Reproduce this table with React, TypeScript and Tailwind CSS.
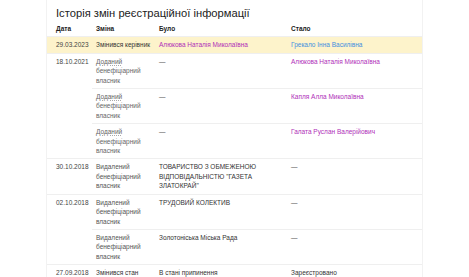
import React from "react";

type Sub = { change: React.ReactNode; was: React.ReactNode; now: React.ReactNode };
type Row = { date: string; subs: Sub[]; highlight?: boolean };

const P = ({ children }: { children: React.ReactNode }) => (
  <span className="text-[#b02fb8]">{children}</span>
);
const Dash = () => <span className="text-[#555]">—</span>;
const Added = () => (
  <span className="text-[#666]">
    <span className="underline decoration-dotted decoration-[#aaa] underline-offset-[1px]">Доданий</span>
    <br />
    бенефіціарний
    <br />
    власник
  </span>
);
const Removed = () => (
  <span className="text-[#555]">
    Видалений
    <br />
    бенефіціарний
    <br />
    власник
  </span>
);

const rows: Row[] = [
  {
    date: "29.03.2023",
    highlight: true,
    subs: [
      {
        change: <span className="text-[#333] whitespace-nowrap">Змінився керівник</span>,
        was: <P>Алюкова Наталія Миколаївна</P>,
        now: <span className="text-[#3f8fe0]">Грекало Інна Василівна</span>,
      },
    ],
  },
  {
    date: "18.10.2021",
    subs: [
      { change: <Added />, was: <Dash />, now: <P>Алюкова Наталія Миколаївна</P> },
      { change: <Added />, was: <Dash />, now: <P>Капля Алла Миколаївна</P> },
      { change: <Added />, was: <Dash />, now: <P>Галата Руслан Валерійович</P> },
    ],
  },
  {
    date: "30.10.2018",
    subs: [
      {
        change: <Removed />,
        was: (
          <span className="text-[#333]">
            ТОВАРИСТВО З ОБМЕЖЕНОЮ ВІДПОВІДАЛЬНІСТЮ "ГАЗЕТА ЗЛАТОКРАЙ"
          </span>
        ),
        now: <Dash />,
      },
    ],
  },
  {
    date: "02.10.2018",
    subs: [
      { change: <Removed />, was: <span className="text-[#333]">ТРУДОВИЙ КОЛЕКТИВ</span>, now: <Dash /> },
      { change: <Removed />, was: <span className="text-[#333]">Золотоніська Міська Рада</span>, now: <Dash /> },
    ],
  },
  {
    date: "27.09.2018",
    subs: [
      {
        change: <span className="text-[#333]">Змінився стан</span>,
        was: <span className="text-[#333]">В стані припинення</span>,
        now: <span className="text-[#333]">Зареєстровано</span>,
      },
    ],
  },
];

export default function App() {
  return (
    <div
      className="w-full h-[277px] overflow-hidden bg-white"
      style={{ fontFamily: "'Liberation Sans', Arial, sans-serif" }}
    >
      <div className="mx-auto w-[377px] min-h-[277px] border-x border-[#f2f2f2] bg-white">
        <h2 className="pl-[9px] pt-[5px] text-[11.2px] leading-[16px] font-normal text-[#222]">
          Історія змін реєстраційної інформації
        </h2>
        <table className="w-full border-collapse text-[6.5px] leading-[9.4px] table-fixed">
          <colgroup>
            <col className="w-[45px]" />
            <col className="w-[63px]" />
            <col className="w-[132px]" />
            <col />
          </colgroup>
          <thead>
            <tr className="text-left text-[#222]">
              <th className="pl-[9px] pr-[4px] pt-[3px] pb-[3px] font-bold">Дата</th>
              <th className="px-[4px] pt-[3px] pb-[3px] font-bold">Зміна</th>
              <th className="px-[4px] pt-[3px] pb-[3px] font-bold">Було</th>
              <th className="px-[4px] pt-[3px] pb-[3px] font-bold">Стало</th>
            </tr>
          </thead>
          <tbody>
            {rows.map((r) =>
              r.subs.map((s, i) => (
                <tr
                  key={r.date + i}
                  className={r.highlight ? "bg-[#fdf3cb] align-top" : "align-top"}
                >
                  {i === 0 && (
                    <td
                      rowSpan={r.subs.length}
                      className="pl-[9px] pr-[2px] pt-[3px] pb-[3px] border-t border-[#efefef] text-[#444]"
                    >
                      {r.date}
                    </td>
                  )}
                  <td className="px-[4px] pt-[3px] pb-[3px] border-t border-[#efefef]">{s.change}</td>
                  <td className="px-[4px] pt-[3px] pb-[3px] border-t border-[#efefef]">{s.was}</td>
                  <td className="px-[4px] pt-[3px] pb-[3px] border-t border-[#efefef]">{s.now}</td>
                </tr>
              ))
            )}
          </tbody>
        </table>
      </div>
    </div>
  );
}
